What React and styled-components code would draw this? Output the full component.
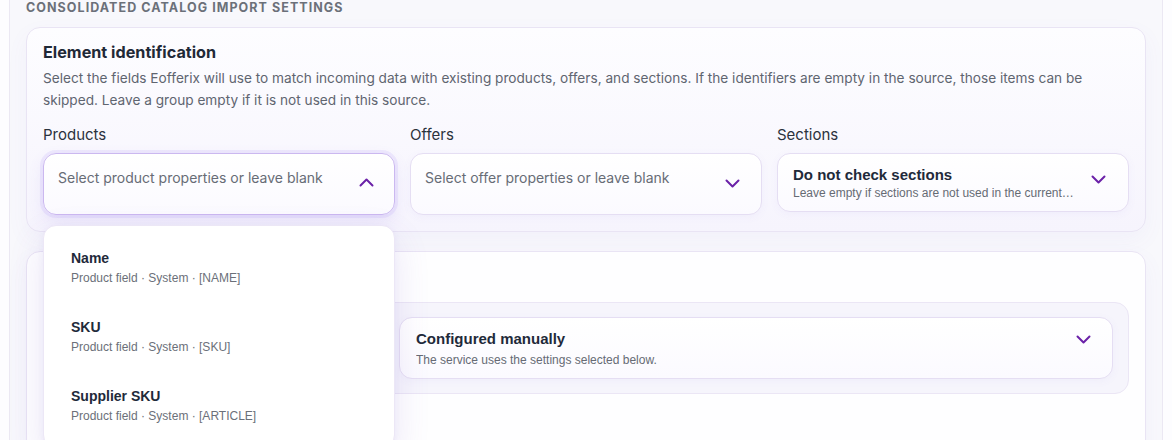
import styled, { createGlobalStyle } from "styled-components";

const GlobalStyle = createGlobalStyle`
  html, body {
    margin: 0;
    padding: 0;
    background: #fdfdff;
    font-family: Inter, "Noto Sans", sans-serif;
    overflow: hidden;
  }
`;

const productOptions = [
  { name: "Name", meta: "Product field · System · [NAME]" },
  { name: "SKU", meta: "Product field · System · [SKU]" },
  { name: "Supplier SKU", meta: "Product field · System · [ARTICLE]" },
];

const Chevron = ({ up }) => (
  <svg width="15" height="9" viewBox="0 0 15 9" fill="none">
    <path
      d={up ? "M1.5 7.5l6-6 6 6" : "M1.5 1.5l6 6 6-6"}
      stroke="#6b21a8"
      strokeWidth="2"
      strokeLinecap="round"
      strokeLinejoin="round"
    />
  </svg>
);

const App = () => {
  return (
    <Page>
      <GlobalStyle />
      <Panel>
        <Heading>Consolidated catalog import settings</Heading>

        <Card>
          <CardTitle>Element identification</CardTitle>
          <Description>
            Select the fields Eofferix will use to match incoming data with existing products, offers, and
            sections. If the identifiers are empty in the source, those items can be skipped. Leave a group
            empty if it is not used in this source.
          </Description>

          <FieldGrid>
            <Field>
              <Label>Products</Label>
              <Select $focused $right={20}>
                <Placeholder>Select product properties or leave blank</Placeholder>
                <ChevronBox $top={26}>
                  <Chevron up />
                </ChevronBox>
              </Select>
              <Dropdown>
                {productOptions.map((o) => (
                  <Option key={o.name}>
                    <OptionName>{o.name}</OptionName>
                    <OptionMeta>{o.meta}</OptionMeta>
                  </Option>
                ))}
              </Dropdown>
            </Field>

            <Field>
              <Label>Offers</Label>
              <Select $right={21}>
                <Placeholder>Select offer properties or leave blank</Placeholder>
                <ChevronBox $top={27}>
                  <Chevron />
                </ChevronBox>
              </Select>
            </Field>

            <Field>
              <Label>Sections</Label>
              <Select $compact $right={22}>
                <ValueBlock>
                  <ValueTitle>Do not check sections</ValueTitle>
                  <ValueHint>Leave empty if sections are not used in the current source</ValueHint>
                </ValueBlock>
                <ChevronBox $top={25}>
                  <Chevron />
                </ChevronBox>
              </Select>
            </Field>
          </FieldGrid>
        </Card>

        <Card $plain>
          {/* header and mode label sit under the open dropdown */}
          <CardHeader />
          <ModeBox>
            <ModeSlot />
            <Select $wide $right={21}>
              <ValueBlock>
                <ValueTitle $big>Configured manually</ValueTitle>
                <ValueHint $gap={5}>The service uses the settings selected below.</ValueHint>
              </ValueBlock>
              <ChevronBox $top={21}>
                <Chevron />
              </ChevronBox>
            </Select>
          </ModeBox>
        </Card>
      </Panel>
    </Page>
  );
};

const Page = styled.div`
  padding: 0 9px;
  height: 500px;
`;

const Panel = styled.section`
  height: 100%;
  box-sizing: border-box;
  background: #f8f8fc;
  border-left: 1px solid #ebe8f3;
  border-right: 1px solid #ebe8f3;
  padding: 0 16px;
  display: flex;
  flex-direction: column;
  gap: 19px;
`;

const Heading = styled.h2`
  margin: 0 0 -19px;
  padding: 1px 0 0;
  height: 26px;
  font-size: 12.5px;
  line-height: 14px;
  font-weight: 700;
  letter-spacing: 0.085em;
  text-transform: uppercase;
  color: #6b7079;
`;

const Card = styled.div`
  border: 1px solid #e9e4f4;
  border-radius: 14px;
  padding: 14px 16px 16px;
  background: ${(p) =>
    p.$plain ? "#fefeff" : "linear-gradient(180deg, #fdfdff 0%, #f6f4fd 100%)"};
  box-shadow: 0 8px 22px rgba(124, 92, 220, 0.05);
  flex-shrink: 0;
  ${(p) => p.$plain && "flex: 1;"}
`;

const CardTitle = styled.h3`
  margin: 0;
  font-size: 16.2px;
  line-height: 20px;
  font-weight: 700;
  color: #1f2937;
`;

const CardHeader = styled.div`
  height: 20px;
`;

const Description = styled.p`
  margin: 5px 0 0;
  font-size: 13.65px;
  line-height: 22px;
  color: #5f6570;
`;

const FieldGrid = styled.div`
  display: grid;
  grid-template-columns: repeat(3, minmax(0, 1fr));
  gap: 15px;
  margin-top: 14px;
  align-items: start;
`;

const Field = styled.div`
  position: relative;
  display: flex;
  flex-direction: column;
  gap: 8px;
  min-width: 0;
`;

const Label = styled.label`
  font-size: 15px;
  line-height: 20px;
  color: #2b323d;
`;

const Select = styled.div`
  display: flex;
  align-items: flex-start;
  justify-content: space-between;
  gap: 16px;
  box-sizing: border-box;
  min-height: ${(p) => (p.$compact ? "59px" : "62px")};
  padding: ${(p) => (p.$compact || p.$wide ? "12px" : "14px")} ${(p) => p.$right}px 10px
    ${(p) => (p.$compact ? "15px" : p.$wide ? "16px" : "14px")};
  border-radius: 13px;
  background: linear-gradient(180deg, #ffffff 0%, #fbfaff 100%);
  border: 1px solid ${(p) => (p.$focused ? "#cbb8f0" : "#e5def3")};
  box-shadow: ${(p) =>
    p.$focused
      ? "0 0 0 3px rgba(167, 139, 250, 0.14), 0 6px 16px rgba(124, 92, 220, 0.12)"
      : "0 2px 8px rgba(124, 92, 220, 0.05)"};
  min-width: 0;
`;

const Placeholder = styled.span`
  font-size: 14px;
  line-height: 20px;
  color: #676c76;
  white-space: nowrap;
  overflow: hidden;
  text-overflow: ellipsis;
`;

const ChevronBox = styled.span`
  display: flex;
  flex-shrink: 0;
  margin-top: ${(p) => p.$top - 16}px;
`;

const ValueBlock = styled.div`
  display: flex;
  flex-direction: column;
  min-width: 0;
`;

const ValueTitle = styled.span`
  font-family: "Liberation Sans", Arial, sans-serif;
  font-size: 15px;
  line-height: 17px;
  font-weight: 700;
  color: #1f2a3a;
`;

const ValueHint = styled.span`
  margin-top: ${(p) => p.$gap ?? 2}px;
  font-family: "Liberation Sans", Arial, sans-serif;
  font-size: 12px;
  line-height: 16px;
  color: #666b74;
  white-space: nowrap;
  overflow: hidden;
  text-overflow: ellipsis;
`;

const Dropdown = styled.ul`
  position: absolute;
  top: 100px;
  left: 0;
  right: 0;
  margin: 0;
  padding: 7px 0;
  list-style: none;
  background: #ffffff;
  border: 1px solid #ece7f6;
  border-radius: 13px;
  box-shadow: 0 14px 36px rgba(110, 80, 200, 0.14), 0 2px 6px rgba(110, 80, 200, 0.06);
  z-index: 10;
`;

const Option = styled.li`
  display: flex;
  flex-direction: column;
  gap: 3px;
  padding: 16px 27px 16px;
`;

const OptionName = styled.span`
  font-family: "Liberation Sans", Arial, sans-serif;
  font-size: 14px;
  line-height: 18px;
  font-weight: 700;
  color: #1f2a3a;
`;

const OptionMeta = styled.span`
  font-family: "Liberation Sans", Arial, sans-serif;
  font-size: 12px;
  line-height: 16px;
  color: #6b7079;
`;

const ModeBox = styled.div`
  margin-top: 16px;
  display: grid;
  grid-template-columns: 325px minmax(0, 1fr);
  gap: 15px;
  align-items: center;
  padding: 14px 15px;
  border: 1px solid #ebe6f5;
  border-radius: 14px;
  background: #f6f5fc;
`;

const ModeSlot = styled.div`
  min-height: 20px;
`;

export default App;
